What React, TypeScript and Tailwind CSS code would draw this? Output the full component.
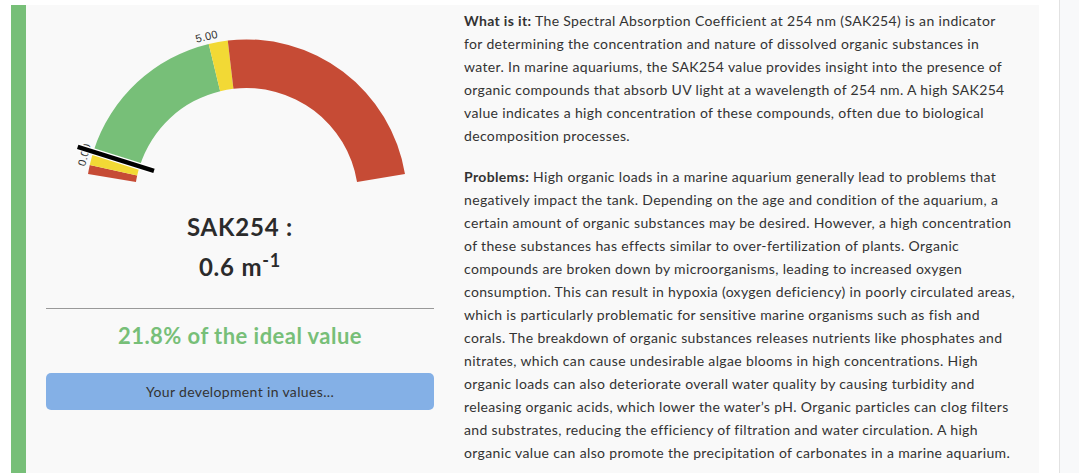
import React from "react";

// Gauge geometry (local svg coords). Angles are measured from the left horizontal, clockwise over the top.
const CX = 200.5;
const CY = 195;
const R_OUT = 160.6;
const R_IN = 112;

const pt = (rad: number, deg: number): [number, number] => {
  const a = (deg * Math.PI) / 180;
  return [CX - rad * Math.cos(a), CY - rad * Math.sin(a)];
};

const arcPath = (a1: number, a2: number) => {
  const [x1, y1] = pt(R_OUT, a1);
  const [x2, y2] = pt(R_OUT, a2);
  const [x3, y3] = pt(R_IN, a2);
  const [x4, y4] = pt(R_IN, a1);
  const large = a2 - a1 > 180 ? 1 : 0;
  return `M${x1},${y1} A${R_OUT},${R_OUT} 0 ${large} 1 ${x2},${y2} L${x3},${y3} A${R_IN},${R_IN} 0 ${large} 0 ${x4},${y4} Z`;
};

const SEGMENTS = [
  { from: 9.3, to: 12.6, color: "#c64b35" },
  { from: 12.6, to: 17.8, color: "#f2d935" },
  { from: 17.8, to: 76.4, color: "#77bf78" },
  { from: 76.4, to: 83.3, color: "#f2d935" },
  { from: 83.3, to: 170.7, color: "#c64b35" },
];

function Label({ text, angle }: { text: string; angle: number }) {
  const [x, y] = pt(R_OUT + 4, angle);
  return (
    <text
      x={x}
      y={y}
      textAnchor="middle"
      fontSize={11}
      fill="#333"
      fontFamily="'Liberation Sans', Arial, sans-serif"
      transform={`rotate(${-(90 - angle)} ${x} ${y})`}
    >
      {text}
    </text>
  );
}

function Gauge() {
  const needle = 17.5;
  const [nx1, ny1] = pt(97, needle);
  const [nx2, ny2] = pt(177, needle);
  return (
    <svg width={388} height={202} className="block">
      {SEGMENTS.map((s) => (
        <path key={s.from} d={arcPath(s.from, s.to)} fill={s.color} />
      ))}
      <Label text="5.00" angle={76.3} />
      <Label text="0.00" angle={15.6} />
      <line x1={nx1} y1={ny1} x2={nx2} y2={ny2} stroke="#fff" strokeWidth={7} />
      <line x1={nx1} y1={ny1} x2={nx2} y2={ny2} stroke="#000" strokeWidth={4.5} />
    </svg>
  );
}

const WHAT = [
  "for determining the concentration and nature of dissolved organic substances in",
  "water. In marine aquariums, the SAK254 value provides insight into the presence of",
  "organic compounds that absorb UV light at a wavelength of 254 nm. A high SAK254",
  "value indicates a high concentration of these compounds, often due to biological",
  "decomposition processes.",
];

const PROBLEMS = [
  "negatively impact the tank. Depending on the age and condition of the aquarium, a",
  "certain amount of organic substances may be desired. However, a high concentration",
  "of these substances has effects similar to over-fertilization of plants. Organic",
  "compounds are broken down by microorganisms, leading to increased oxygen",
  "consumption. This can result in hypoxia (oxygen deficiency) in poorly circulated areas,",
  "which is particularly problematic for sensitive marine organisms such as fish and",
  "corals. The breakdown of organic substances releases nutrients like phosphates and",
  "nitrates, which can cause undesirable algae blooms in high concentrations. High",
  "organic loads can also deteriorate overall water quality by causing turbidity and",
  "releasing organic acids, which lower the water\u2019s pH. Organic particles can clog filters",
  "and substrates, reducing the efficiency of filtration and water circulation. A high",
  "organic value can also promote the precipitation of carbonates in a marine aquarium.",
];

function Lines({ lines }: { lines: string[] }) {
  return (
    <>
      {lines.map((l) => (
        <span key={l} className="block whitespace-nowrap">
          {l}
        </span>
      ))}
    </>
  );
}

export default function App() {
  return (
    <div className="flex h-[473px] overflow-hidden bg-white font-['Lato',sans-serif] tracking-[0.35px] text-[#333]">
      <div className="flex-1 pl-[11px] pr-[20px] pt-[5px]">
        <div className="flex h-full border-l-[15px] border-[#77bf78] bg-[#f9f9f9]">
          <div className="w-[388px] ml-[20px] flex flex-col">
            <Gauge />
            <div className="text-center text-[24px] font-bold leading-[40px] tracking-[0.8px] text-[#2b2b2b]">
              <div>SAK254 :</div>
              <div>
                0.6 m<sup className="text-[18px]">-1</sup>
              </div>
            </div>
            <hr className="mt-[21px] border-t border-[#999]" />
            <div className="mt-[12px] text-center text-[22px] font-bold leading-[30px] tracking-[0.45px] text-[#77bf78]">
              21.8% of the ideal value
            </div>
            <button className="mt-[22px] h-[37px] rounded-[5px] bg-[#84b0e6] text-[14px] text-[#333]">
              Your development in values...
            </button>
          </div>
          <div className="ml-[30px] pt-[4px] text-[14px] leading-[23px]">
            <p>
              <span className="block whitespace-nowrap">
                <b>What is it:</b> The Spectral Absorption Coefficient at 254 nm (SAK254) is an indicator
              </span>
              <Lines lines={WHAT} />
            </p>
            <p className="mt-[18px]">
              <span className="block whitespace-nowrap">
                <b>Problems:</b> High organic loads in a marine aquarium generally lead to problems that
              </span>
              <Lines lines={PROBLEMS} />
            </p>
          </div>
        </div>
      </div>
      <div className="w-[20px] border-l border-[#e2e2e2] bg-[#f8f9fa]" />
    </div>
  );
}
